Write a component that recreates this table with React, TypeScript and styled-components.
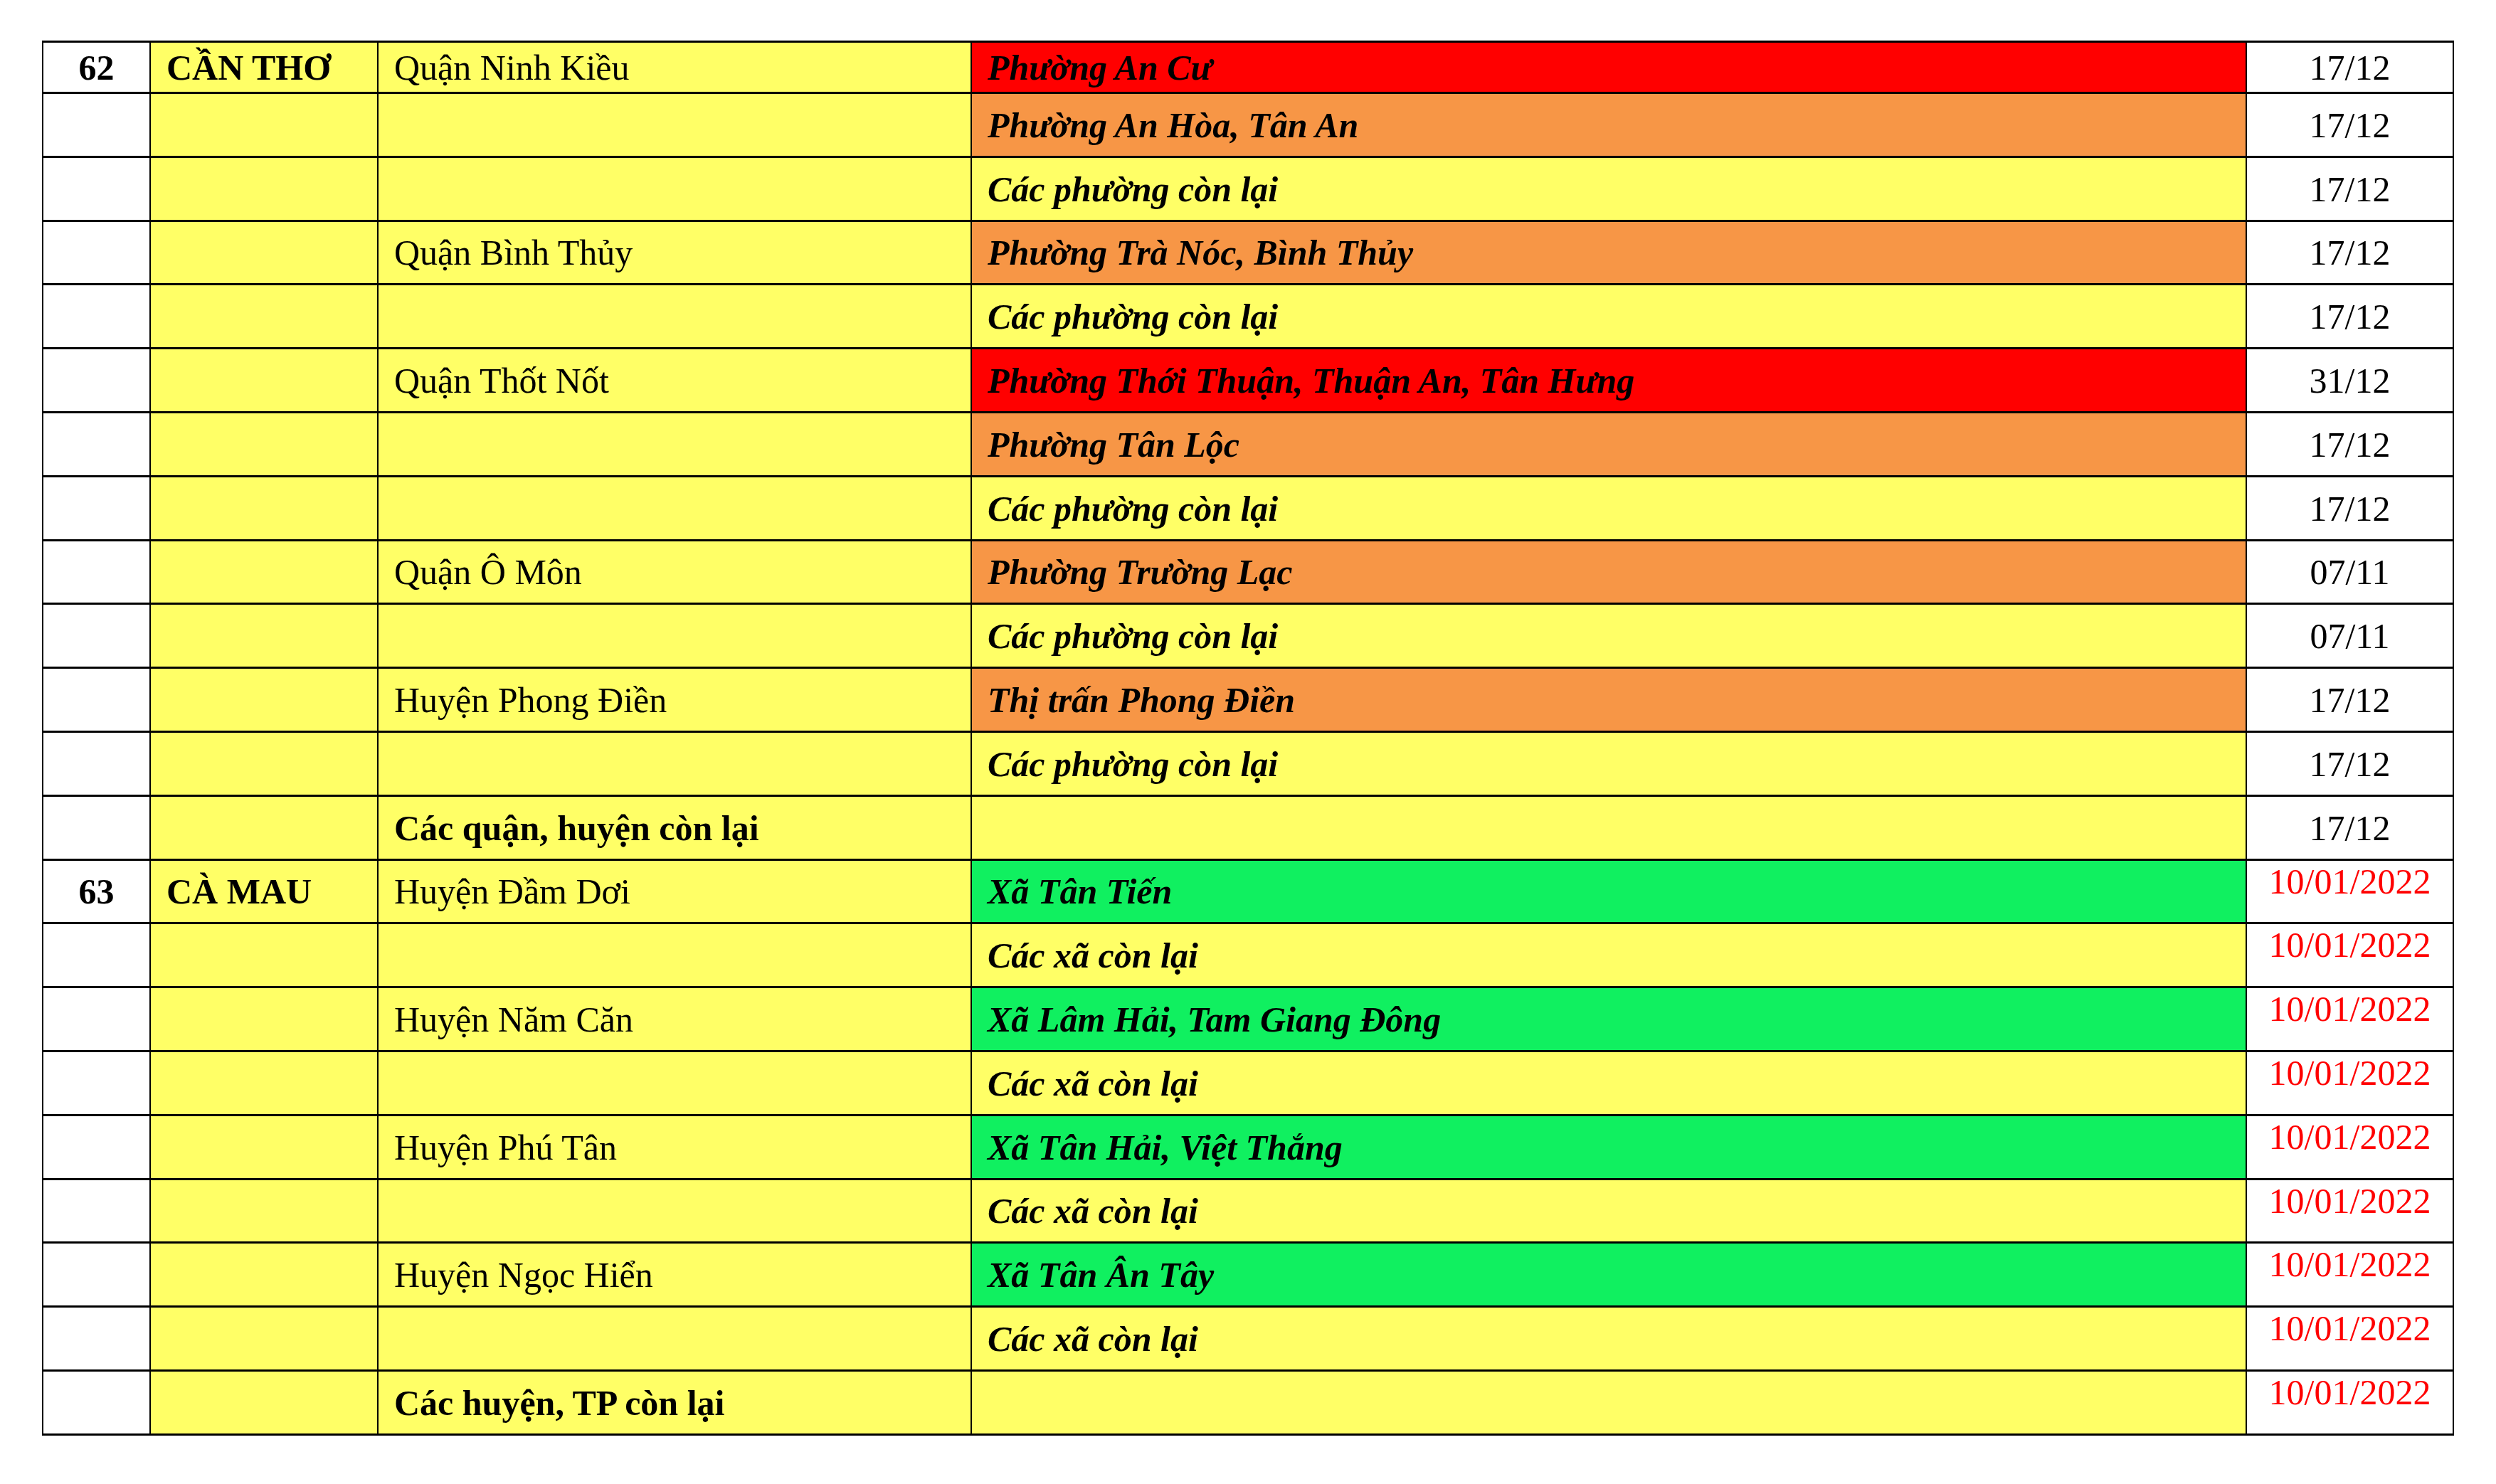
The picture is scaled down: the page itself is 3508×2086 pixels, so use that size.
import styled, { createGlobalStyle } from "styled-components";

const GlobalStyle = createGlobalStyle`
  html, body {
    margin: 0;
    padding: 0;
    background: #ffffff;
  }
  body {
    font-family: "Liberation Serif", "Times New Roman", serif;
    color: #000000;
  }
`;

const YELLOW = "#ffff66";
const RED = "#ff0000";
const ORANGE = "#f79646";
const GREEN = "#10f060";

const Page = styled.div`
  width: 3508px;
  height: 2086px;
  padding: 57px 0 0 59px;
  box-sizing: border-box;
`;

const Table = styled.div`
  display: flex;
  flex-direction: column;
  gap: 3px;
  width: 3390px;
  padding: 3px 2px;
  box-sizing: border-box;
  background: #000000;
`;

const Row = styled.div<{ $h: number }>`
  display: grid;
  grid-template-columns: 149px 318px 832px 1790px 289px;
  column-gap: 2px;
  height: ${(p) => p.$h}px;
`;

const Cell = styled.div`
  display: flex;
  align-items: center;
  padding: 2px 22px 0;
  box-sizing: border-box;
  font-size: 50px;
  line-height: 57px;
  white-space: nowrap;
  overflow: hidden;
`;

const NumCell = styled(Cell)`
  justify-content: center;
  background: #ffffff;
  font-weight: bold;
`;

const ProvinceCell = styled(Cell)`
  background: ${YELLOW};
  font-weight: bold;
`;

const DistrictCell = styled(Cell)<{ $bold?: boolean }>`
  background: ${YELLOW};
  font-weight: ${(p) => (p.$bold ? "bold" : "normal")};
`;

const WardCell = styled(Cell)<{ $bg: string }>`
  background: ${(p) => p.$bg};
  font-weight: bold;
  font-style: italic;
`;

const DateCell = styled(Cell)<{ $red?: boolean }>`
  justify-content: center;
  align-items: ${(p) => (p.$red ? "flex-start" : "center")};
  padding-top: ${(p) => (p.$red ? "1px" : "2px")};
  background: #ffffff;
  color: ${(p) => (p.$red ? RED : "#000000")};
`;

type Line = {
  no?: string;
  province?: string;
  district?: string;
  districtBold?: boolean;
  ward?: string;
  color: string;
  date: string;
  red?: boolean;
};

const lines: Line[] = [
  { no: "62", province: "CẦN THƠ", district: "Quận Ninh Kiều", ward: "Phường An Cư", color: RED, date: "17/12" },
  { ward: "Phường An Hòa, Tân An", color: ORANGE, date: "17/12" },
  { ward: "Các phường còn lại", color: YELLOW, date: "17/12" },
  { district: "Quận Bình Thủy", ward: "Phường Trà Nóc, Bình Thủy", color: ORANGE, date: "17/12" },
  { ward: "Các phường còn lại", color: YELLOW, date: "17/12" },
  { district: "Quận Thốt Nốt", ward: "Phường Thới Thuận, Thuận An, Tân Hưng", color: RED, date: "31/12" },
  { ward: "Phường Tân Lộc", color: ORANGE, date: "17/12" },
  { ward: "Các phường còn lại", color: YELLOW, date: "17/12" },
  { district: "Quận Ô Môn", ward: "Phường Trường Lạc", color: ORANGE, date: "07/11" },
  { ward: "Các phường còn lại", color: YELLOW, date: "07/11" },
  { district: "Huyện Phong Điền", ward: "Thị trấn Phong Điền", color: ORANGE, date: "17/12" },
  { ward: "Các phường còn lại", color: YELLOW, date: "17/12" },
  { district: "Các quận, huyện còn lại", districtBold: true, color: YELLOW, date: "17/12" },
  { no: "63", province: "CÀ MAU", district: "Huyện Đầm Dơi", ward: "Xã Tân Tiến", color: GREEN, date: "10/01/2022", red: true },
  { ward: "Các xã còn lại", color: YELLOW, date: "10/01/2022", red: true },
  { district: "Huyện Năm Căn", ward: "Xã Lâm Hải, Tam Giang Đông", color: GREEN, date: "10/01/2022", red: true },
  { ward: "Các xã còn lại", color: YELLOW, date: "10/01/2022", red: true },
  { district: "Huyện Phú Tân", ward: "Xã Tân Hải, Việt Thắng", color: GREEN, date: "10/01/2022", red: true },
  { ward: "Các xã còn lại", color: YELLOW, date: "10/01/2022", red: true },
  { district: "Huyện Ngọc Hiển", ward: "Xã Tân Ân Tây", color: GREEN, date: "10/01/2022", red: true },
  { ward: "Các xã còn lại", color: YELLOW, date: "10/01/2022", red: true },
  { district: "Các huyện, TP còn lại", districtBold: true, color: YELLOW, date: "10/01/2022", red: true },
];

export default function App() {
  return (
    <>
      <GlobalStyle />
      <Page>
        <Table>
          {lines.map((l, i) => (
            <Row key={i} $h={i === 0 ? 69 : 86.8}>
              <NumCell>{l.no}</NumCell>
              <ProvinceCell>{l.province}</ProvinceCell>
              <DistrictCell $bold={l.districtBold}>{l.district}</DistrictCell>
              <WardCell $bg={l.color}>{l.ward}</WardCell>
              <DateCell $red={l.red}>{l.date}</DateCell>
            </Row>
          ))}
        </Table>
      </Page>
    </>
  );
}
